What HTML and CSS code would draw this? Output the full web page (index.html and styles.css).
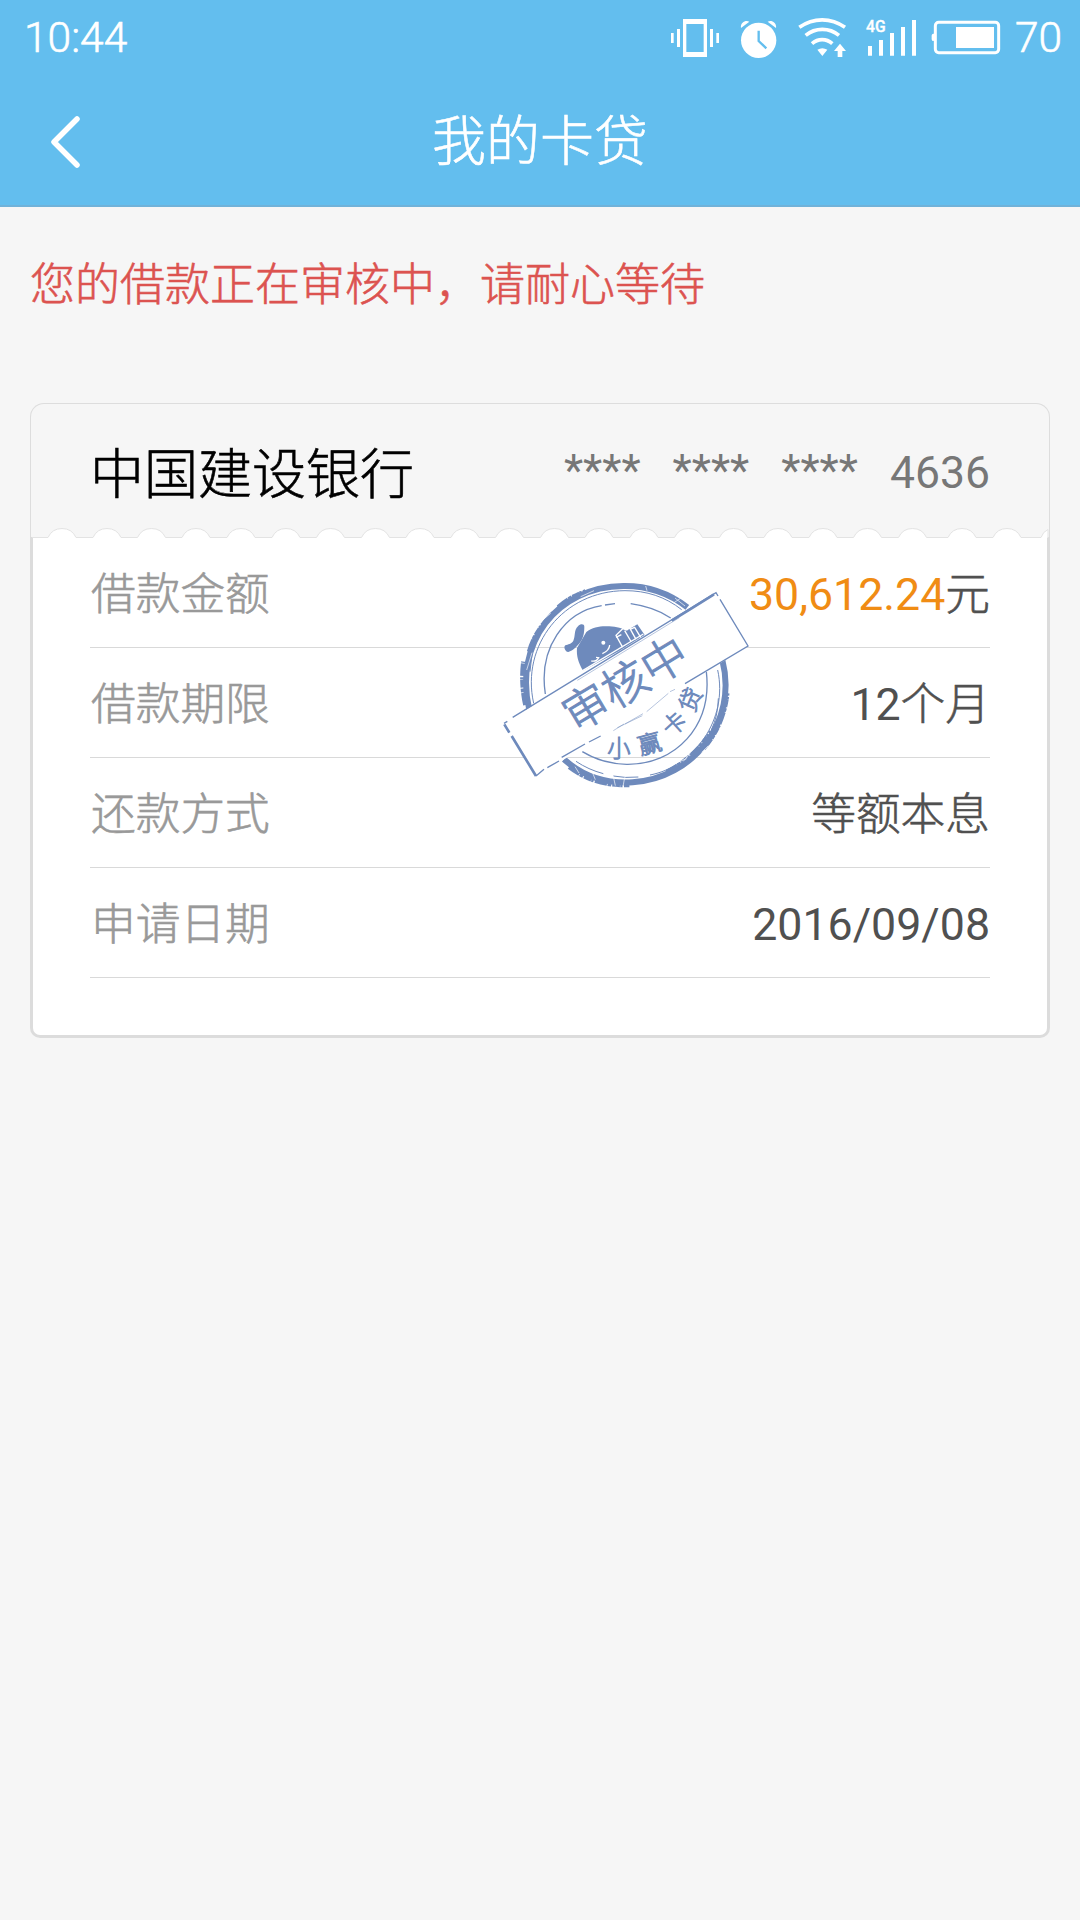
FILE: index.html
```html
<!DOCTYPE html>
<html lang="zh-CN">
<head>
  <meta charset="UTF-8">
  <meta name="viewport" content="width=device-width, initial-scale=1.0">
  <title>我的卡贷</title>
  <link rel="stylesheet" href="styles.css">
</head>
<body>
  <header class="header">
    <div class="status-bar">
      <span class="time">10:44</span>
      <div class="status-icons">
        <svg class="vibrate" viewBox="30 54 150 120" width="50" height="40">
          <path fill-rule="evenodd" d="M69 57h72v114H69zM79 72v84h52V72z"/>
          <path d="M51 87h9v54h-9zM150 87h9v54h-9zM33 99h8v30h-8zM169 99h8v30h-8z"/>
        </svg>
        <svg class="alarm" viewBox="240 54 111 120" width="37" height="40">
          <circle cx="296" cy="121" r="53"/>
          <path d="M243 84c-3-14 12-26 25-19zM348 84c3-14-12-26-25-19z"/>
          <path class="hands" d="M296 92v31l23 22"/>
        </svg>
        <svg class="wifi" viewBox="414 54 147 120" width="49" height="40">
          <path class="wave" d="M418 82c42-30 95-30 137 0M437 106c29-24 71-24 100 0M456 131c18-16 43-16 61 0"/>
          <path d="M472 149q15-9 30 0l-15 19zM540 131l18 22h-11v18h-14v-18h-11z"/>
        </svg>
        <svg class="signal" viewBox="48 54 153 120" width="51" height="40">
          <text x="48" y="95">4G</text>
          <path d="M54 138h12v29H54zM87 120h12v47H87zM120 99h12v68h-12zM153 81h12v86h-12zM186 60h12v107h-12z"/>
        </svg>
        <svg class="battery" viewBox="243 54 210 120" width="70" height="40">
          <rect class="shell" x="256" y="67" width="190" height="91" rx="10"/>
          <path d="M252 101v22c-8 0-7-5-7-11s-1-11 7-11zM318 81h114v63H318z"/>
        </svg>
        <span class="level">70</span>
      </div>
    </div>
    <nav class="nav-bar">
      <svg class="back" viewBox="0 0 30 54" width="30" height="54">
        <path d="M27 4L4 27l23 23"/>
      </svg>
      <h1>我的卡贷</h1>
    </nav>
  </header>

  <main>
    <p class="notice">您的借款正在审核中，请耐心等待</p>

    <section class="card">
      <div class="card-head">
        <h2>中国建设银行</h2>
        <span class="card-no"><span class="mask">****</span><span class="mask">****</span><span class="mask">****</span><span>4636</span></span>
      </div>
      <!-- ticket edge -->
      <svg class="edge" viewBox="30 527 1020 20" width="1020" height="20">
        <path class="paper" d="M33 537.5H1047V547H33z"/>
        <path class="line" d="M32 537.5H48a15.4 15.4 0 0 1 28 0h17a15.4 15.4 0 0 1 28 0h16.5a15.4 15.4 0 0 1 28 0h16.5a15.4 15.4 0 0 1 28 0h17a15.4 15.4 0 0 1 28 0h17a15.4 15.4 0 0 1 28 0h16.5a15.4 15.4 0 0 1 28 0h17a15.4 15.4 0 0 1 28 0h16.5a15.4 15.4 0 0 1 28 0h17a15.4 15.4 0 0 1 28 0h16.5a15.4 15.4 0 0 1 28 0h17a15.4 15.4 0 0 1 28 0h16.5a15.4 15.4 0 0 1 28 0h17a15.4 15.4 0 0 1 28 0h16.5a15.4 15.4 0 0 1 28 0h17a15.4 15.4 0 0 1 28 0h16.5a15.4 15.4 0 0 1 28 0h17a15.4 15.4 0 0 1 28 0h16.5a15.4 15.4 0 0 1 28 0h17a15.4 15.4 0 0 1 28 0h21.5a15.4 15.4 0 0 1 28 0h17a15.4 15.4 0 0 1 28 0H1041"/>
        <path class="line" d="M1041 537.5q2-6 7-8v8"/>
      </svg>
      <div class="card-body">
        <div class="row"><span class="label">借款金额</span><span class="value"><b class="num amount">30,612.24</b>元</span></div>
        <div class="row"><span class="label">借款期限</span><span class="value"><b class="num">12</b>个月</span></div>
        <div class="row"><span class="label">还款方式</span><span class="value">等额本息</span></div>
        <div class="row"><span class="label">申请日期</span><span class="value"><b class="num">2016/09/08</b></span></div>
      </div>

      <svg class="stamp" viewBox="0 0 810 660" width="270" height="220">
        <!-- rings -->
        <path class="ring" d="M118 420C70 220 200 50 400 48C470 47 535 68 592 112M697 270C745 455 610 625 428 637C345 642 275 616 222 568"/>
        <path class="rough" d="M107 405c-9-40-12-87-6-130M118 245c15-50 40-85 75-117M205 112c25-21 50-36 82-47M238 590c55 42 115 57 180 54M530 607c55-28 100-69 134-122M640 535c40-45 65-105 71-165"/>
        <path class="thin" d="M131 400C92 225 220 63 405 62C470 62 525 80 575 119M683 300C716 450 610 590 480 615M126 250l-6 55M340 611q-45-12-82-37M445 621q-40 4-75-3M664 480q20-42 21-95"/>
        <path class="inner" d="M166 372C145 235 223 125 335 107M345 105l30-4M422 101q72 10 120 43M649 305C668 470 555 585 410 583q-75-2-133-38"/>
        <!-- mascot -->
        <path class="solid" d="M226 226c8-4 18-3 24-14c7-14 1-31 14-43c7-8 19-8 19 1c0 19-3 35-14 49c-8 10-20 23-34 27c-8 1-16-14-9-20z"/>
        <path class="solid" d="M279 302c-14-25-20-44-18-68l28-48c20-16 46-19 69-17c22 1 40 7 54 12l30-18l22 32l-78 49z"/>
        <path class="detail" d="M274 304l186-112M304 273q15 3 22-10l-8-1M337 251q21-9 22-26M412 180l-14-4-20 20 20 36M378 202l16-8M404 182l20 34M418 172l20 36M420 178l14-6 18 30"/>
        <circle class="eye" cx="340" cy="218" r="6"/>
        <!-- banner -->
        <path class="banner" d="M42 460L678 68L775 228L138 620z"/>
        <path class="inner" d="M68 442L678 68L684 78M690 88L774 228L585 341M332 498l-35 18M285 522l-70 40M207 573l-35 20M162 598l-24 20M42 460l10-6"/>
        <path class="fine" d="M262 331L568 143M370 482l32-20M405 462l54-31M470 425l65-55M540 365l15-7M382 473l75-36"/>
        <path class="bold" d="M545 152L600 118L672 73M43 463L58 488M65 498L138 618"/>
        <text class="stamp-text" transform="translate(405 341) rotate(-31)" x="0" y="50">审核中</text>
        <text class="stamp-name" transform="translate(387 536)" y="25">小</text>
        <text class="stamp-name" transform="translate(479 522) rotate(-15)" y="25">赢</text>
        <text class="stamp-name" transform="translate(553 461) rotate(-42)" y="25">卡</text>
        <text class="stamp-name" transform="translate(602 389) rotate(-67)" y="25">贷</text>
        <path class="scratch" d="M152 155l30-25M272 80l40-18M467 48l4 14M570 86l-18 12M555 84l30 24M110 300l16-52M255 590l12 19M308 609l8 20M370 619l6 28M404 622l-5 28M600 550l-20 24M530 590l60-24M635 547l20-20"/>
      </svg>
    </section>
  </main>
</body>
</html>
```
FILE: styles.css
```css
* {
  box-sizing: border-box;
}

body {
  margin: 0;
  min-height: 1920px;
  background: #f6f6f6;
  font-family: Roboto, "Noto Sans CJK SC", sans-serif;
  font-weight: 300;
  -webkit-text-stroke: 0.6px;
}

h1, h2, p {
  margin: 0;
}

svg {
  display: block;
  overflow: visible;
}

.header {
  height: 207px;
  background: #63beee;
  border-bottom: 2px solid #70b2d9;
  color: #fff;
  fill: #fff;
}

.status-bar {
  display: flex;
  justify-content: space-between;
  height: 76px;
  padding: 0 18px 0 24px;
  font-size: 42.5px;
  line-height: 76px;
}

.status-icons {
  display: flex;
  align-items: center;
}

.alarm {
  margin-left: 20px;
}

.wifi {
  margin-left: 21px;
}

.signal {
  margin-left: 19px;
}

.battery,
.level {
  margin-left: 14px;
}

.level {
  width: 47px;
}

.hands {
  fill: none;
  stroke: #63beee;
  stroke-width: 7;
}

.wave {
  fill: none;
  stroke: #fff;
  stroke-width: 11;
}

.signal text {
  font-size: 47px;
  font-weight: 500;
  stroke: #fff;
}

.shell {
  fill: none;
  stroke: #fff;
  stroke-width: 9;
}

.nav-bar {
  display: grid;
  grid-template-columns: 80px 1fr 80px;
  align-items: center;
  height: 130px;
  padding: 0 0 1px 50px;
}

.nav-bar h1 {
  padding: 5px 50px 0 0;
  font-size: 54px;
  font-weight: 300;
  line-height: 80px;
  text-align: center;
}

.back {
  margin-top: 2px;
  fill: none;
  stroke: #fff;
  stroke-width: 5.5;
  stroke-linecap: round;
  stroke-linejoin: round;
}

.notice {
  padding: 49px 30px 0;
  font-size: 45px;
  line-height: 60px;
  color: #dc5350;
}

.card {
  position: relative;
  width: 1020px;
  margin: 87px 30px 0;
}

.card-head {
  display: flex;
  justify-content: space-between;
  align-items: center;
  height: 134px;
  padding: 0 59px;
  border: 1px solid #ddd;
  border-bottom: 0;
  border-radius: 14px 14px 0 0;
}

.card-head h2 {
  font-size: 54px;
  font-weight: 300;
  color: #000;
}

.card-no {
  display: flex;
  gap: 32px;
  padding-top: 4px;
  font-size: 44.5px;
  font-weight: 400;
  color: #777;
  -webkit-text-stroke: 0;
}

.mask {
  margin-top: -2px;
}

.edge {
  position: absolute;
  top: 124px;
  left: 0;
}

.paper {
  fill: #fff;
}

.line {
  fill: #fff;
  stroke: #e3e3e3;
}

.card-body {
  height: 501px;
  padding: 0 57px;
  background: #fff;
  border: 3px solid #dcdcdc;
  border-top: 0;
  border-radius: 0 0 10px 10px;
}

.row {
  display: flex;
  justify-content: space-between;
  align-items: center;
  height: 110px;
  padding-top: 5px;
  border-bottom: 1px solid #d9d9d9;
  font-size: 44.7px;
  line-height: 54px;
}

.row:first-child {
  height: 111px;
}

.label {
  padding-left: 1px;
  color: #999;
}

.value {
  color: #505050;
}

.num {
  font-weight: 400;
  -webkit-text-stroke: 0;
}

.amount {
  color: #f08c14;
}

.stamp {
  position: absolute;
  top: 167px;
  left: 460px;
  fill: none;
  stroke: #6e8abc;
}

.ring {
  stroke-width: 18;
}

.rough {
  stroke-width: 15;
  stroke-dasharray: 37 2 11 3 23 1 7 4;
}

.thin {
  stroke-width: 3;
}

.inner {
  stroke-width: 4;
}

.fine {
  stroke-width: 1.5;
}

.bold {
  stroke-width: 8;
}

.solid {
  fill: #6e8abc;
  stroke: none;
}

.detail {
  stroke: #fff;
  stroke-width: 4;
}

.eye,
.banner {
  fill: #fff;
  stroke: none;
}

.stamp-text,
.stamp-name {
  fill: #6e8abc;
  stroke: #6e8abc;
  stroke-width: 3;
  text-anchor: middle;
}

.stamp-text {
  font-size: 137px;
}

.stamp-name {
  font-size: 70px;
}

.scratch {
  stroke: #fff;
  stroke-width: 2;
}
```
